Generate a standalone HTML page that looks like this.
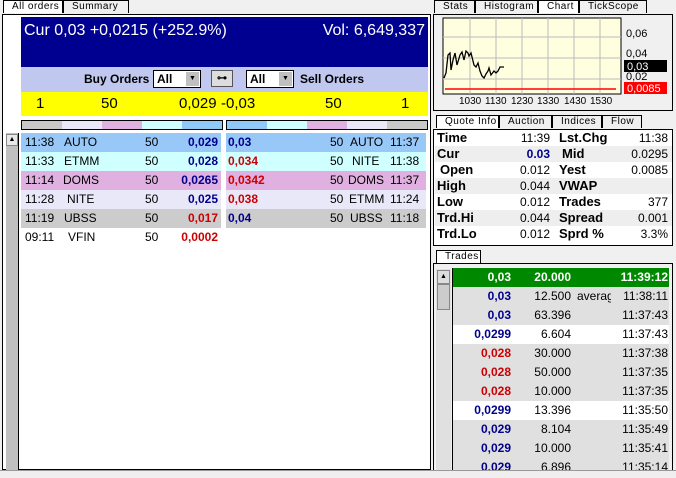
<!DOCTYPE html>
<html><head><style>
*{margin:0;padding:0;box-sizing:border-box}
body{width:676px;height:478px;background:#f0f0f0;position:relative;overflow:hidden;font-family:"Liberation Sans",sans-serif;font-size:12px}
.a{position:absolute}
.tab{position:absolute;height:13px;border:1px solid #000;border-bottom:none;background:#f0f0f0;font-size:10px;line-height:12px;padding-left:8px;letter-spacing:.5px}
.tab.on{background:#fff}
.r{position:absolute;height:19px;line-height:19px;font-size:12px;white-space:nowrap}
.r span{position:absolute}
.b{color:#00008b;font-weight:bold}
.rd{color:#c00;font-weight:bold}
.q{position:absolute;left:435px;width:237px;height:16px;line-height:16px;font-size:12px}
.q span{position:absolute}
.q .k{font-weight:bold;font-size:13px}
.t{position:absolute;left:453px;width:216px;height:19px;line-height:19px;font-size:12px;background:#e0e0e0}
.t span{position:absolute;text-align:right;white-space:nowrap}
</style></head><body>
<div class="tab on" style="left:3px;top:0;width:60px">All orders</div>
<div class="tab" style="left:63px;top:0;width:66px">Summary</div>
<div class="a" style="left:2px;top:14px;width:429px;height:456px;border:1px solid #000;background:#fff"></div>
<div class="a" style="left:6px;top:133px;width:13px;height:337px;background:#c0c0c0;border-right:1px solid #000"></div>
<div class="a" style="left:6px;top:134px;width:12px;height:12px;background:#e8e8e8;border:1px solid #888;font-size:7px;text-align:center;line-height:10px">▲</div>
<div class="a" style="left:21px;top:17px;width:407px;height:50px;background:#000090;color:#fff;font-size:16px">
<span class="a" style="left:3px;top:5px">Cur 0,03 +0,0215 (+252.9%)</span>
<span class="a" style="right:3px;top:5px">Vol: 6,649,337</span></div>
<div class="a" style="left:21px;top:67px;width:407px;height:25px;background:#c0c8f0;font-weight:bold;font-size:12px">
<span class="a" style="left:63px;top:5px">Buy Orders</span>
<div class="a" style="left:132px;top:3px;width:48px;height:18px;background:#fff;border:1px solid #000;padding-left:3px;line-height:16px">All<div class="a" style="right:1px;top:1px;width:13px;height:14px;background:#c0c0c0;font-size:7px;text-align:center;line-height:14px">▼</div></div>
<div class="a" style="left:190px;top:3px;width:22px;height:17px;background:#ddd;border:1px solid #555;font-size:10px;text-align:center;line-height:15px">⊶</div>
<div class="a" style="left:225px;top:3px;width:48px;height:18px;background:#fff;border:1px solid #000;padding-left:3px;line-height:16px">All<div class="a" style="right:1px;top:1px;width:13px;height:14px;background:#c0c0c0;font-size:7px;text-align:center;line-height:14px">▼</div></div>
<span class="a" style="left:279px;top:5px">Sell Orders</span></div>
<div class="a" style="left:21px;top:92px;width:407px;height:24px;background:#ff0;font-size:15px;line-height:24px">
<span class="a" style="left:15px">1</span><span class="a" style="left:80px">50</span><span class="a" style="left:158px">0,029</span><span class="a" style="left:200px">-0,03</span><span class="a" style="left:304px">50</span><span class="a" style="left:380px">1</span></div>
<div class="a" style="left:21px;top:120px;width:202px;height:10px;border:1px solid #000;display:flex"><i style="flex:1;background:#c8c8c8"></i><i style="flex:1;background:#e8e8f8"></i><i style="flex:1;background:#e0b0e0"></i><i style="flex:1;background:#d0ffff"></i><i style="flex:1;background:#90c8f8"></i></div>
<div class="a" style="left:226px;top:120px;width:202px;height:10px;border:1px solid #000;display:flex"><i style="flex:1;background:#90c8f8"></i><i style="flex:1;background:#d0ffff"></i><i style="flex:1;background:#e0b0e0"></i><i style="flex:1;background:#e8e8f8"></i><i style="flex:1;background:#c8c8c8"></i></div>
<div class="r" style="left:21px;top:133px;width:200px;background:#98c8f8"><span style="left:4px">11:38</span><span style="left:43px">AUTO</span><span style="left:124px">50</span><span class="b" style="right:3px">0,029</span></div>
<div class="r" style="left:21px;top:152px;width:200px;background:#d0ffff"><span style="left:4px">11:33</span><span style="left:43px">ETMM</span><span style="left:124px">50</span><span class="b" style="right:3px">0,028</span></div>
<div class="r" style="left:21px;top:171px;width:200px;background:#e0b0e0"><span style="left:4px">11:14</span><span style="left:42px">DOMS</span><span style="left:124px">50</span><span class="b" style="right:3px">0,0265</span></div>
<div class="r" style="left:21px;top:190px;width:200px;background:#e8e8f8"><span style="left:4px">11:28</span><span style="left:46px">NITE</span><span style="left:124px">50</span><span class="b" style="right:3px">0,025</span></div>
<div class="r" style="left:21px;top:209px;width:200px;background:#ccc"><span style="left:4px">11:19</span><span style="left:43px">UBSS</span><span style="left:124px">50</span><span class="rd" style="right:3px">0,017</span></div>
<div class="r" style="left:21px;top:228px;width:200px"><span style="left:4px">09:11</span><span style="left:47px">VFIN</span><span style="left:124px">50</span><span class="rd" style="right:3px">0,0002</span></div>
<div class="r" style="left:226px;top:133px;width:200px;background:#98c8f8"><span class="b" style="left:2px">0,03</span><span style="left:104px">50</span><span style="left:124px">AUTO</span><span style="left:164px">11:37</span></div>
<div class="r" style="left:226px;top:152px;width:200px;background:#d0ffff"><span class="rd" style="left:2px">0,034</span><span style="left:104px">50</span><span style="left:126px">NITE</span><span style="left:164px">11:38</span></div>
<div class="r" style="left:226px;top:171px;width:200px;background:#e0b0e0"><span class="rd" style="left:2px">0,0342</span><span style="left:104px">50</span><span style="left:122px">DOMS</span><span style="left:164px">11:37</span></div>
<div class="r" style="left:226px;top:190px;width:200px;background:#e8e8f8"><span class="rd" style="left:2px">0,038</span><span style="left:104px">50</span><span style="left:123px">ETMM</span><span style="left:164px">11:24</span></div>
<div class="r" style="left:226px;top:209px;width:200px;background:#ccc"><span class="b" style="left:2px">0,04</span><span style="left:104px">50</span><span style="left:124px">UBSS</span><span style="left:164px">11:18</span></div>
<div class="tab" style="left:434px;top:0;width:41px">Stats</div>
<div class="tab" style="left:475px;top:0;width:63px">Histogram</div>
<div class="tab on" style="left:538px;top:0;width:41px">Chart</div>
<div class="tab" style="left:579px;top:0;width:68px">TickScope</div>
<div class="a" style="left:433px;top:14px;width:240px;height:97px;border:1px solid #000;background:#f0f0f0"></div>
<svg class="a" style="left:434px;top:15px" width="238" height="95">
<rect x="9" y="3" width="178" height="76" fill="#ffffe0" stroke="#000"/>
<g stroke="#bbb" stroke-width="1"><line x1="36" y1="3" x2="36" y2="79"/><line x1="62" y1="3" x2="62" y2="79"/><line x1="88" y1="3" x2="88" y2="79"/><line x1="114" y1="3" x2="114" y2="79"/><line x1="140" y1="3" x2="140" y2="79"/><line x1="166" y1="3" x2="166" y2="79"/><line x1="9" y1="22" x2="187" y2="22"/><line x1="9" y1="43" x2="187" y2="43"/><line x1="9" y1="64" x2="187" y2="64"/></g>
<line x1="11" y1="74" x2="182" y2="74" stroke="red" stroke-width="1.5"/>
<polyline fill="none" stroke="#000" stroke-width="1.3" points="10,63 12,58 14,40 16,38 17,55 19,45 21,38 23,50 26,40 28,37 30,45 32,36 34,38 35,41 37,38 40,50 42,52 44,48 46,56 48,61 50,63 52,59 54,56 55,53 57,60 60,56 62,58 64,56 66,52 70,52"/>
<g font-size="11" font-family="Liberation Sans"><text x="192" y="22">0,06</text><text x="192" y="42">0,04</text><text x="192" y="65">0,02</text>
<rect x="190" y="45" width="43" height="12" fill="#000"/><text x="193" y="55" fill="#fff">0,03</text>
<rect x="190" y="67" width="43" height="12" fill="red"/><text x="193" y="77" fill="#fff">0,0085</text></g>
</svg>
<div class="a" style="left:443px;top:96px;font-size:10px;width:180px"><span class="a" style="left:16px">1030</span><span class="a" style="left:42px">1130</span><span class="a" style="left:68px">1230</span><span class="a" style="left:94px">1330</span><span class="a" style="left:121px">1430</span><span class="a" style="left:147px">1530</span></div>
<div class="tab on" style="left:436px;top:115px;width:63px">Quote Info</div>
<div class="tab" style="left:499px;top:115px;width:53px">Auction</div>
<div class="tab" style="left:552px;top:115px;width:50px">Indices</div>
<div class="tab" style="left:602px;top:115px;width:40px">Flow</div>
<div class="a" style="left:433px;top:129px;width:240px;height:117px;border:1px solid #000;background:#fff"></div>
<div class="q" style="top:130px"><span class="k" style="left:2px">Time</span><span style="right:122px">11:39</span><span class="k" style="left:124px">Lst.Chg</span><span style="right:4px">11:38</span></div>
<div class="q" style="top:146px;background:#eee"><span class="k" style="left:2px">Cur</span><span class="b" style="right:122px">0.03</span><span class="k" style="left:127px">Mid</span><span style="right:4px">0.0295</span></div>
<div class="q" style="top:162px"><span class="k" style="left:5px">Open</span><span style="right:122px">0.012</span><span class="k" style="left:124px">Yest</span><span style="right:4px">0.0085</span></div>
<div class="q" style="top:178px;background:#eee"><span class="k" style="left:2px">High</span><span style="right:122px">0.044</span><span class="k" style="left:124px">VWAP</span></div>
<div class="q" style="top:194px"><span class="k" style="left:2px">Low</span><span style="right:122px">0.012</span><span class="k" style="left:124px">Trades</span><span style="right:4px">377</span></div>
<div class="q" style="top:210px;background:#eee"><span class="k" style="left:2px">Trd.Hi</span><span style="right:122px">0.044</span><span class="k" style="left:124px">Spread</span><span style="right:4px">0.001</span></div>
<div class="q" style="top:226px"><span class="k" style="left:2px">Trd.Lo</span><span style="right:122px">0.012</span><span class="k" style="left:124px">Sprd %</span><span style="right:4px">3.3%</span></div>
<div class="tab on" style="left:436px;top:250px;width:45px">Trades</div>
<div class="a" style="left:433px;top:263px;width:240px;height:207px;border:1px solid #000;border-bottom:none;background:#f0f0f0"></div>
<div class="a" style="left:436px;top:269px;width:15px;height:201px;background:#e0e0e0"></div>
<div class="a" style="left:437px;top:270px;width:13px;height:14px;background:#ddd;border:1px solid #888;font-size:7px;text-align:center;line-height:12px">▲</div>
<div class="a" style="left:437px;top:284px;width:13px;height:26px;background:#ccc;border:1px solid #888"></div>
<div class="a" style="left:452px;top:268px;width:2px;height:202px;background:#000"></div>
<div class="t" style="top:268px;background:#080;color:#fff;font-weight:bold"><span style="right:158px">0,03</span><span style="right:98px">20.000</span><span style="right:1px">11:39:12</span></div>
<div class="t" style="top:287px"><span class="b" style="right:158px">0,03</span><span style="right:98px">12.500</span><span style="left:124px;width:34px;overflow:hidden;text-align:left">averag</span><span style="right:1px">11:38:11</span></div>
<div class="t" style="top:306px"><span class="b" style="right:158px">0,03</span><span style="right:98px">63.396</span><span style="right:1px">11:37:43</span></div>
<div class="t" style="top:325px;background:#fff"><span class="b" style="right:158px">0,0299</span><span style="right:98px">6.604</span><span style="right:1px">11:37:43</span></div>
<div class="t" style="top:344px"><span class="rd" style="right:158px">0,028</span><span style="right:98px">30.000</span><span style="right:1px">11:37:38</span></div>
<div class="t" style="top:363px"><span class="rd" style="right:158px">0,028</span><span style="right:98px">50.000</span><span style="right:1px">11:37:35</span></div>
<div class="t" style="top:382px"><span class="rd" style="right:158px">0,028</span><span style="right:98px">10.000</span><span style="right:1px">11:37:35</span></div>
<div class="t" style="top:401px;background:#fff"><span class="b" style="right:158px">0,0299</span><span style="right:98px">13.396</span><span style="right:1px">11:35:50</span></div>
<div class="t" style="top:420px"><span class="b" style="right:158px">0,029</span><span style="right:98px">8.104</span><span style="right:1px">11:35:49</span></div>
<div class="t" style="top:439px"><span class="b" style="right:158px">0,029</span><span style="right:98px">10.000</span><span style="right:1px">11:35:41</span></div>
<div class="t" style="top:458px;height:12px;overflow:hidden"><span class="b" style="right:158px">0,029</span><span style="right:98px">6.896</span><span style="right:1px">11:35:14</span></div>
<div class="a" style="left:0;top:470px;width:676px;height:8px;background:#f0eeee;border-top:1px solid #999"></div>
</body></html>
